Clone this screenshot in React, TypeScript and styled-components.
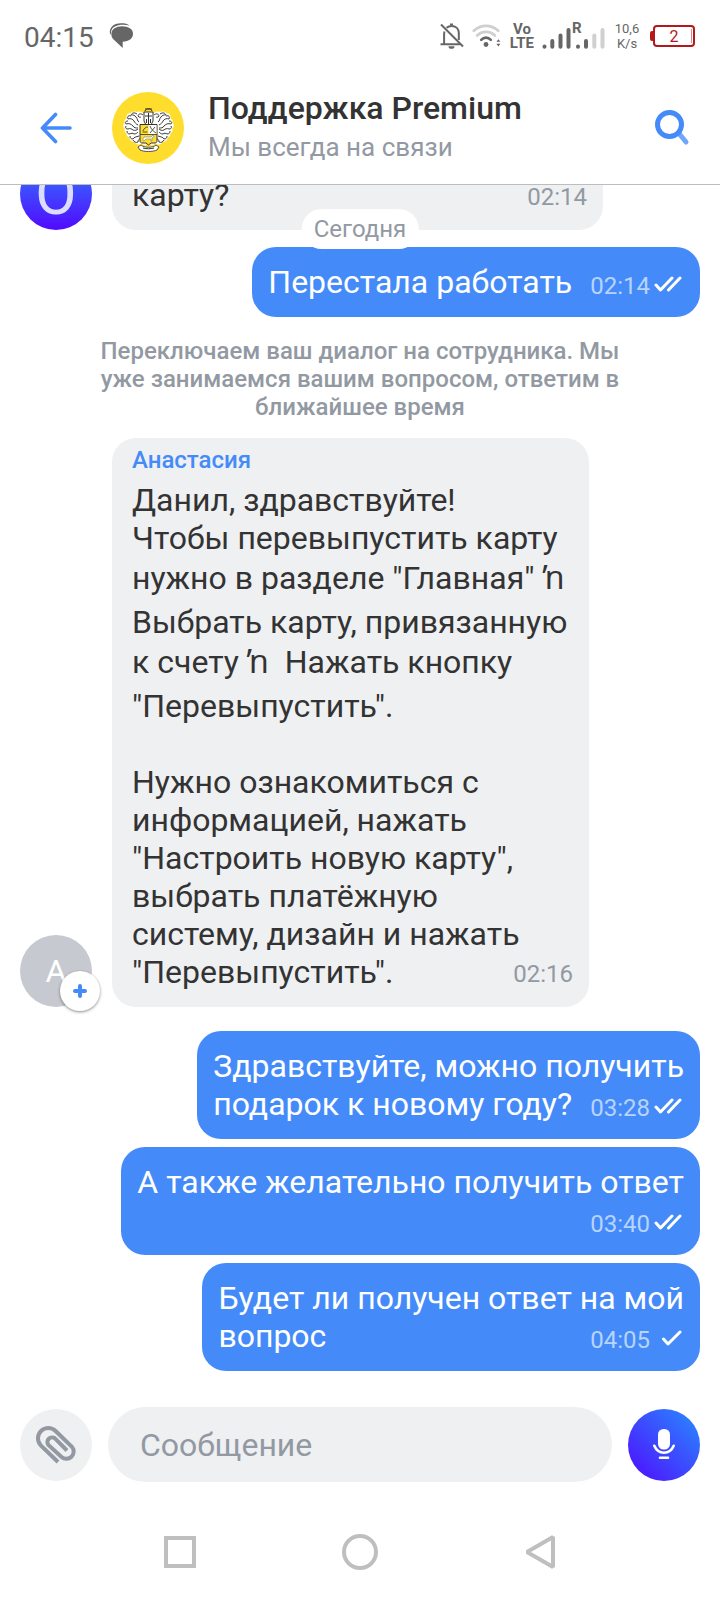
import React from 'react';
import styled, { createGlobalStyle, css } from 'styled-components';

const GlobalStyle = createGlobalStyle`
  *, *::before, *::after { box-sizing: border-box; }
  body {
    margin: 0;
    background: #fff;
    color: #333;
    font-family: Roboto, "Noto Sans", sans-serif;
  }
  button, input { font-family: inherit; }
  button { border: 0; padding: 0; background: none; cursor: pointer; }
  svg { display: block; flex: none; }
`;

const Screen = styled.div`
  display: flex;
  flex-direction: column;
  height: 100vh;
  overflow: hidden;
`;

/* ---------- status bar ---------- */

const StatusBar = styled.div`
  display: flex;
  flex: none;
  align-items: center;
  justify-content: space-between;
  height: 72px;
  padding: 0 25px 0 24px;
  color: #666;
`;

const StatusGroup = styled.div<{ $gap: number }>`
  display: flex;
  align-items: center;
  gap: ${(p) => p.$gap}px;
`;

const Clock = styled.time`
  padding-top: 3px;
  font-size: 28px;
  line-height: 34px;
`;

const Volte = styled.span`
  font-size: 15px;
  font-weight: 700;
  line-height: 14px;
  text-align: center;
`;

const Speed = styled.span`
  width: 28px;
  font-size: 13px;
  line-height: 15px;
  text-align: center;
`;

const Battery = styled.span`
  position: relative;
  width: 42px;
  height: 22px;
  margin-left: 4px;
  border: 2px solid #b3181b;
  border-radius: 4px;
  color: #b3181b;
  font-size: 16px;
  line-height: 19px;
  text-align: center;

  &::before {
    content: '';
    position: absolute;
    top: 4px;
    left: -5px;
    width: 3px;
    height: 10px;
    border-radius: 2px 0 0 2px;
    background: #b3181b;
  }

  &::after {
    content: '';
    position: absolute;
    top: 2px;
    right: 1px;
    width: 1px;
    height: 14px;
    background: #d88a8b;
  }
`;

/* ---------- header ---------- */

const Header = styled.header`
  display: flex;
  flex: none;
  align-items: center;
  height: 113px;
  padding: 0 28px 0 36px;
  border-bottom: 1px solid #bdbdbf;
`;

const IconButton = styled.button`
  display: grid;
  place-items: center;
  width: 40px;
  height: 40px;
`;

const BrandAvatar = styled.div`
  width: 72px;
  height: 72px;
  margin: 0 24px 0 36px;
  border-radius: 50%;
  background: #ffdd2d;
`;

const Heading = styled.div`
  display: flex;
  flex: 1;
  flex-direction: column;
  gap: 2px;
  min-width: 0;
`;

const Title = styled.h1`
  margin: 0;
  font-size: 32px;
  font-weight: 500;
  line-height: 36px;
`;

const Subtitle = styled.p`
  margin: 0;
  color: #9299a2;
  font-size: 26px;
  line-height: 38px;
`;

/* ---------- conversation ---------- */

const Chat = styled.main`
  position: relative;
  display: flex;
  flex: 1;
  flex-direction: column;
  justify-content: flex-end;
  min-height: 0;
  padding: 0 20px 24px;
  overflow: hidden;
`;

const DateChip = styled.div`
  position: absolute;
  z-index: 1;
  top: 24px;
  left: 50%;
  padding: 6px 12px;
  border-radius: 20px;
  background: #fff;
  color: #9299a2;
  font-size: 24px;
  line-height: 28px;
  transform: translateX(-50%);
`;

const IncomingRow = styled.div`
  display: flex;
  flex: none;
  align-items: flex-end;
  gap: 20px;
`;

const OutgoingGroup = styled.div<{ $gapAbove: number }>`
  display: flex;
  flex: none;
  flex-direction: column;
  align-items: flex-end;
  gap: 8px;
  margin-top: ${(p) => p.$gapAbove}px;
`;

const Avatar = styled.div<{ $tone: 'violet' | 'grey' }>`
  position: relative;
  display: grid;
  flex: none;
  place-items: center;
  width: 72px;
  height: 72px;
  border-radius: 50%;
  ${(p) =>
    p.$tone === 'violet'
      ? css`
          background: linear-gradient(#2f80ff, #5209ff);
          color: #dcdcff;
          font-size: 60px;
          line-height: 72px;
        `
      : css`
          background: #c6cad0;
          color: #fff;
          font-size: 32px;
        `}
`;

const AddBadge = styled.button`
  position: absolute;
  right: -8px;
  bottom: -4px;
  display: grid;
  place-items: center;
  width: 40px;
  height: 40px;
  border-radius: 50%;
  background: #fff;
  box-shadow: 0 1px 3px rgba(0, 0, 0, 0.45);
`;

const Bubble = styled.article<{ $side: 'in' | 'out'; $width?: number; $named?: boolean }>`
  display: flow-root;
  padding: ${(p) => (p.$named ? 8 : 16)}px 16px 16px ${(p) => (p.$side === 'in' ? 20 : 16)}px;
  border-radius: 24px;
  background: ${(p) => (p.$side === 'in' ? '#eff0f2' : '#448bf9')};
  color: ${(p) => (p.$side === 'in' ? '#333' : '#fff')};
  font-size: 32px;
  line-height: 38px;
  white-space: pre-wrap;
  ${(p) => p.$width && css`flex: 0 1 ${p.$width}px;`}
`;

const Author = styled.div`
  margin-bottom: 7px;
  color: #448bf9;
  font-size: 24px;
  font-weight: 500;
  line-height: 28px;
`;

const TallGlyph = styled.span`
  display: inline-block;
  padding: 1px 0 7px;
  font-family: 'Noto Sans', sans-serif;
`;

const Meta = styled.span<{ $side: 'in' | 'out' }>`
  display: flex;
  float: right;
  align-items: center;
  gap: 4px;
  height: 38px;
  padding-top: ${(p) => (p.$side === 'in' ? 4 : 8)}px;
  margin-left: 18px;
  color: ${(p) => (p.$side === 'in' ? '#9299a2' : '#b8d4fd')};
  font-size: 24px;
  line-height: 28px;
`;

const SystemNote = styled.p`
  flex: none;
  margin: 20px 70px 17px;
  color: #9299a2;
  font-size: 24px;
  font-weight: 500;
  line-height: 28px;
  text-align: center;
`;

/* ---------- composer and navigation ---------- */

const Composer = styled.form`
  display: flex;
  flex: none;
  align-items: center;
  gap: 16px;
  padding: 12px 20px 22px;
`;

const RoundButton = styled.button<{ $accent?: boolean }>`
  flex: none;
  width: 72px;
  height: 72px;
  border-radius: 50%;
  background: ${(p) => (p.$accent ? 'linear-gradient(45deg, #4d14ff 8%, #2b80ff 90%)' : '#eff0f2')};
`;

const MessageInput = styled.input`
  flex: 1;
  min-width: 0;
  height: 75px;
  padding: 0 32px;
  border: 0;
  border-radius: 38px;
  outline: 0;
  background: #eff0f2;
  color: #333;
  font-size: 32px;

  &::placeholder { color: #9299a2; opacity: 1; }
`;

const NavBar = styled.nav`
  display: grid;
  flex: none;
  grid-template-columns: repeat(3, 1fr);
  height: 96px;
  padding: 0 12.5%;
`;

const NavButton = styled.button`
  display: grid;
  place-items: center;
`;

/* ---------- drawings ---------- */

const ChatIcon = () => (
  <svg width="25" height="26" viewBox="0 0 25 26" fill="#666">
    <path d="M3 3.5C5 1 8 .2 12 .2c4 0 6.500 .6 8.500 2.300C17 1.700 13 1.700 9.500 2.200 6 2.800 3.500 4.500 2.500 7c-.6 1.600-.7 3-.4 5C-.2 9.500 .8 6 3 3.500Z" />
    <path d="M13 3.200c6.500 0 11 2.800 11 7.500 0 4.600-4 7.800-10.300 8V25L4.600 16.500C3 15 2.300 13 2.400 10.700 2.600 6 7 3.200 13 3.200Z" />
  </svg>
);

const BellOffIcon = () => (
  <svg width="24" height="26" viewBox="0 0 24 26" fill="none" stroke="#666" strokeWidth="2">
    <path d="M6.500 4.800C8 3.600 9 3 11.500 3c4.500 0 7.300 3 7.300 7v7M4.500 8.500c-.3 1-.4 2-.4 3v9M0.500 21.200H20" />
    <path d="M1 1.500 23 23.500" />
    <path d="M8.500 23.200h6a3 2.600 0 0 1-6 0Z" fill="#666" stroke="none" />
    <path d="M10 1.500h3" />
  </svg>
);

const WifiIcon = () => (
  <svg width="30" height="26" viewBox="0 0 30 26" fill="none" strokeWidth="2.600" strokeLinecap="round">
    <path d="M1.800 7.800c7-6.600 17.500-6.600 24.400 0" stroke="#cfcfcf" />
    <path d="M5 12.600c5.200-5 12.800-5 18 0" stroke="#cfcfcf" />
    <path d="M9.200 16.800c2.800-2.900 6.800-2.900 9.600 0" stroke="#666" />
    <circle cx="14" cy="21.500" r="2.400" fill="#666" />
    <path d="m24.400 18.800 2-2.600 2 2.600ZM24.400 20.800l2 2.600 2-2.600Z" fill="#666" />
  </svg>
);

const SignalIcon = () => (
  <svg width="63" height="34" viewBox="0 -2 63 34" strokeWidth="4" strokeLinecap="round" stroke="#666">
    <path d="M2.500 25.500v.2M10.300 20v5.700M18.500 14.500v11.200M26.500 9v16.700M36 25.500v.2M44 20v5.700" />
    <path d="M52.300 14.500v11.200M60.500 9v16.700" stroke="#d0d0d0" />
    <text x="30" y="12" stroke="none" fill="#666" fontSize="15" fontWeight="700">R</text>
  </svg>
);

const BackIcon = () => (
  <svg width="32" height="32" viewBox="0 0 32 32" fill="none" stroke="#448bf9" strokeWidth="3.600" strokeLinecap="round" strokeLinejoin="round">
    <path d="M30 16H3M15.500 2.500 2.500 16l13 13.500" />
  </svg>
);

const SearchIcon = () => (
  <svg width="36" height="38" viewBox="0 0 36 38" fill="none" strokeWidth="5">
    <path d="m25 24.500 7 8.500" stroke="#70a7fa" strokeLinecap="round" />
    <circle cx="15.500" cy="15.500" r="12" stroke="#448bf9" />
  </svg>
);

const Foliage = () => (
  <>
    <path d="M30 22c-3-2-5 0-5 0s-4-3-6 1c-3-1-4 2-2 4-3 0-4 3-2 4-3 1-3 4 0 5-2 2-1 4 1 4-1 3 1 4 3 4-1 3 2 5 4 4 1 3 4 4 6 2l4 2V25Z" fill="#fff" stroke="#fff" strokeWidth="3" strokeLinejoin="round" />
    <path
      d="M31 23c-2-2-5-1-5 1 1 2 3 1 3 1M25 22c-3-2-5-1-6 1 2-.5 4 .5 5 2 2 2 1 4 3 5M19 24c-3-1-4 1-3 3 2-1 5 0 6 2s2 3 4 4M16 29c-3 0-3 2-2 3 3-1 5 0 7 2 1 2 3 2 5 2M14 34c-1 2 0 3 2 3 2-1 4 0 5 1 2 1 4 0 5-1M15 39c0 2 1 3 3 3 1-1 3-1 4 0 2 0 3-1 4-2M18 44c0 2 1 3 3 3 1-2 3-2 6-3M21 48c1 2 3 3 5 2 0-2 1-3 3-4"
      fill="none"
      stroke="#3a3a36"
      strokeWidth="1"
    />
  </>
);

const Crest = () => (
  <svg width="72" height="72" viewBox="0 0 72 72">
    <Foliage />
    <g transform="translate(73 0) scale(-1 1)">
      <Foliage />
    </g>
    <path d="M32 20h9v9l-2 4h-5l-2-4Z" fill="#fff" stroke="#333" />
    <path d="M33 19c1-3 6-3 7 0M33 17h7M36.500 21v12M33 24h7M34.500 27v4M38.500 27v4" fill="none" stroke="#333" />
    <path d="M28 32.500h17V49c0 1-1 2-2 2h-4l-2.500 2-2.500-2h-4c-1 0-2-1-2-2Z" fill="#ffdd2d" stroke="#333" />
    <path d="M36.500 33h8v9h-8Z" fill="#fff" />
    <path d="M28 42.500h17M38 41l5-6M38 34c1 3 3 5 6 7M31 39c1-3 3-4 5-4M30.500 40h5" fill="none" stroke="#444" strokeWidth=".9" />
    <path d="M31 49v-2l1-2h7l2-2 1 2-2 1v3h-1v-2h-5l-2 2Z" fill="#fff" stroke="#666" strokeWidth=".5" />
    <path d="M29 53c3 3 12 3 15 0l3 2-2 3c-4 2-13 2-17 0l-2-3Z" fill="#fff" stroke="#444" strokeWidth=".9" />
    <path d="M31 56c4 1 7 1 11 0" fill="none" stroke="#333" />
  </svg>
);

const TickIcon = ({ read }: { read: boolean }) => (
  <svg width="30" height="20" viewBox="0 0 30 20" fill="none" stroke="#fff" strokeWidth="3" strokeLinecap="round" strokeLinejoin="round">
    {read ? <path d="m2 9 4.500 5L18 2M14.500 14 26 2" /> : <path d="m9.500 9 4.500 5L26 2" />}
  </svg>
);

const PlusIcon = () => (
  <svg width="14" height="14" viewBox="0 0 14 14" stroke="#448bf9" strokeWidth="4" strokeLinecap="round">
    <path d="M7 2v10M2 7h10" />
  </svg>
);

const ClipIcon = () => (
  <svg width="72" height="72" viewBox="0 0 72 72" fill="none" stroke="#9299a2" strokeWidth="4">
    <path d="M38 53 21 36.600a10.300 10.300 0 0 1 14.600-14.600l16.300 15.800a7.300 7.300 0 0 1-10.400 10.200L28.400 36a4.700 4.700 0 0 1 6.600-6.600L47 41.500" />
  </svg>
);

const MicIcon = () => (
  <svg width="72" height="72" viewBox="0 0 72 72" fill="none" stroke="#fff" strokeWidth="2.600" strokeLinecap="round">
    <rect x="30" y="20" width="12" height="20.500" rx="5.500" fill="#fff" stroke="none" />
    <path d="M26.300 36.800c2 4.600 5.300 7 9.700 7s7.700-2.400 9.700-7M32 48.700h8" />
  </svg>
);

/* ---------- pieces ---------- */

const OutgoingMessage = ({ text, time, read = true }: { text: string; time: string; read?: boolean }) => (
  <Bubble $side="out">
    {text}
    <Meta $side="out">
      <time>{time}</time>
      <TickIcon read={read} />
    </Meta>
  </Bubble>
);

export default function App() {
  return (
    <Screen>
      <GlobalStyle />
      <StatusBar>
        <StatusGroup $gap={15}>
          <Clock>04:15</Clock>
          <ChatIcon />
        </StatusGroup>
        <StatusGroup $gap={8}>
          <BellOffIcon />
          <WifiIcon />
          <Volte>
            Vo
            <br />
            LTE
          </Volte>
          <SignalIcon />
          <Speed>
            10,6
            <br />
            K/s
          </Speed>
          <Battery>2</Battery>
        </StatusGroup>
      </StatusBar>

      <Header>
        <IconButton type="button" aria-label="Назад">
          <BackIcon />
        </IconButton>
        <BrandAvatar>
          <Crest />
        </BrandAvatar>
        <Heading>
          <Title>Поддержка Premium</Title>
          <Subtitle>Мы всегда на связи</Subtitle>
        </Heading>
        <IconButton type="button" aria-label="Поиск">
          <SearchIcon />
        </IconButton>
      </Header>

      <Chat>
        <DateChip>Сегодня</DateChip>

        <IncomingRow>
          <Avatar $tone="violet">О</Avatar>
          <Bubble $side="in" $width={491}>
            карту?
            <Meta $side="in">
              <time>02:14</time>
            </Meta>
          </Bubble>
        </IncomingRow>

        <OutgoingGroup $gapAbove={17}>
          <OutgoingMessage text="Перестала работать" time="02:14" />
        </OutgoingGroup>

        <SystemNote>
          Переключаем ваш диалог на сотрудника. Мы уже занимаемся вашим вопросом, ответим в ближайшее время
        </SystemNote>

        <IncomingRow>
          <Avatar $tone="grey">
            А
            <AddBadge type="button" aria-label="Добавить">
              <PlusIcon />
            </AddBadge>
          </Avatar>
          <Bubble $side="in" $width={477} $named>
            <Author>Анастасия</Author>
            {'Данил, здравствуйте!\nЧтобы перевыпустить карту\nнужно в разделе "Главная" '}
            <TallGlyph>ŉ</TallGlyph>
            {'\nВыбрать карту, привязанную\nк счету '}
            <TallGlyph>ŉ</TallGlyph>
            {'  Нажать кнопку\n"Перевыпустить".\n\nНужно ознакомиться с\nинформацией, нажать\n"Настроить новую карту",\nвыбрать платёжную\nсистему, дизайн и нажать\n"Перевыпустить".'}
            <Meta $side="in">
              <time>02:16</time>
            </Meta>
          </Bubble>
        </IncomingRow>

        <OutgoingGroup $gapAbove={24}>
          <OutgoingMessage text={'Здравствуйте, можно получить\nподарок к новому году?'} time="03:28" />
          <OutgoingMessage text={'А также желательно получить ответ\n'} time="03:40" />
          <OutgoingMessage text={'Будет ли получен ответ на мой\nвопрос'} time="04:05" read={false} />
        </OutgoingGroup>
      </Chat>

      <Composer onSubmit={(e: React.FormEvent) => e.preventDefault()}>
        <RoundButton type="button" aria-label="Прикрепить файл">
          <ClipIcon />
        </RoundButton>
        <MessageInput type="text" placeholder="Сообщение" aria-label="Сообщение" />
        <RoundButton type="button" $accent aria-label="Голосовое сообщение">
          <MicIcon />
        </RoundButton>
      </Composer>

      <NavBar>
        <NavButton type="button" aria-label="Недавние">
          <svg width="32" height="32" fill="none" stroke="#bfbfbf" strokeWidth="4">
            <rect x="2" y="2" width="28" height="28" />
          </svg>
        </NavButton>
        <NavButton type="button" aria-label="Домой">
          <svg width="36" height="36" fill="none" stroke="#bfbfbf" strokeWidth="4">
            <circle cx="18" cy="18" r="16" />
          </svg>
        </NavButton>
        <NavButton type="button" aria-label="Назад">
          <svg width="30" height="36" fill="none" stroke="#bfbfbf" strokeWidth="4" strokeLinejoin="bevel">
            <path d="M28 3v30L2 18Z" />
          </svg>
        </NavButton>
      </NavBar>
    </Screen>
  );
}
